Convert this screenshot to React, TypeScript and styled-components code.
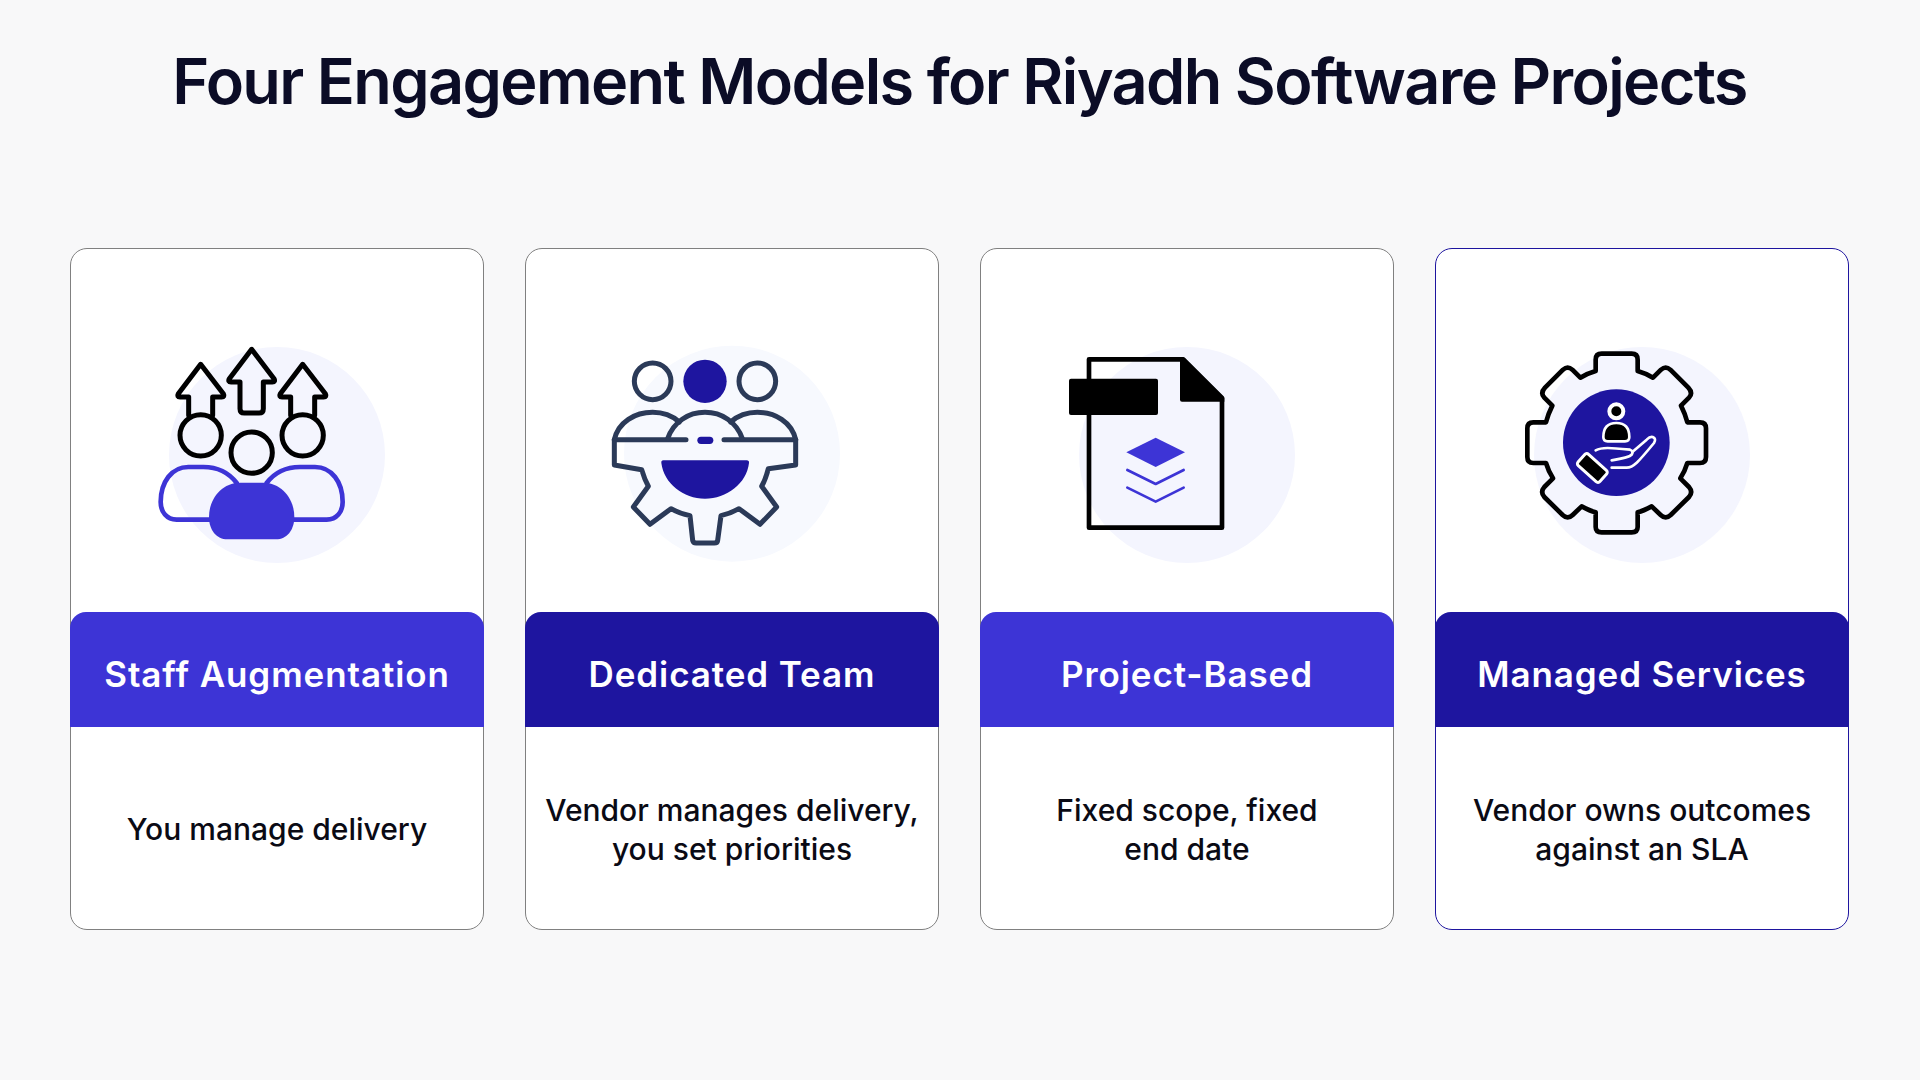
import React from "react";
import styled, { createGlobalStyle } from "styled-components";

const GlobalStyle = createGlobalStyle`
  html, body {
    margin: 0;
    padding: 0;
    background: #f8f8f9;
  }
`;

const INDIGO = "#3d34d6";
const NAVY = "#1e159f";
const SLATE = "#2b3a58";

const Page = styled.main`
  box-sizing: border-box;
  width: 1920px;
  height: 1080px;
  padding: 0 71px 0 70px;
  background: #f8f8f9;
  font-family: Inter, "Liberation Sans", sans-serif;
`;

const Title = styled.h1`
  margin: 0;
  height: 248px;
  padding-top: 41px;
  box-sizing: border-box;
  font-size: 63px;
  line-height: 80px;
  font-weight: 600;
  letter-spacing: -1.65px;
  color: #0b0c26;
  text-align: center;
  white-space: nowrap;
`;

const CardGrid = styled.section`
  display: grid;
  grid-template-columns: repeat(4, 414px);
  column-gap: 41px;
`;

const Card = styled.article<{ $accent?: boolean }>`
  box-sizing: border-box;
  height: 682px;
  display: flex;
  flex-direction: column;
  background: #fff;
  border: 1px solid ${(p) => (p.$accent ? NAVY : "#808080")};
  border-radius: 17px;
`;

const IconArea = styled.div`
  height: 363px;
  padding-top: 71px;
  box-sizing: border-box;
  display: flex;
  justify-content: center;
`;

const IconSvg = styled.svg`
  display: block;
  width: 270px;
  height: 270px;
  fill: none;
  stroke-linejoin: round;
  stroke-linecap: round;
`;

const Band = styled.h2<{ $dark?: boolean }>`
  margin: 0 -1px;
  box-sizing: border-box;
  height: 115px;
  padding-top: 9px;
  flex: none;
  display: flex;
  align-items: center;
  justify-content: center;
  border-radius: 16px 16px 0 0;
  background: ${(p) => (p.$dark ? NAVY : INDIGO)};
  color: #fff;
  font-size: 35px;
  font-weight: 600;
  letter-spacing: 0.9px;
  white-space: nowrap;
`;

const Body = styled.p`
  margin: 0;
  padding-top: 3px;
  flex: 1;
  display: flex;
  align-items: center;
  justify-content: center;
  text-align: center;
  font-size: 30px;
  line-height: 39px;
  font-weight: 500;
  color: #0a0a14;
`;

const StaffIcon = () => (
  <IconSvg viewBox="246 239 810 810">
    <circle cx="651" cy="644" r="324" fill="#f4f5fe" />
    <g stroke="#000" strokeWidth="15">
      <path d="M386 525V470H360Q350 470 355 460L422 372L490 460Q495 470 485 470H458V525" />
      <path d="M575 327L508 415Q503 425 513 425H540V505Q540 518 553 518H597Q610 518 610 505V425H637Q647 425 642 415Z" />
      <path d="M692 525V470H666Q656 470 661 460L728 372L796 460Q801 470 791 470H764V525" />
      <circle cx="422" cy="585" r="62" />
      <circle cx="575" cy="637" r="62" />
      <circle cx="728" cy="585" r="62" />
    </g>
    <g stroke={INDIGO} strokeWidth="14">
      <path d="M530 728C505 695 470 680 430 680H385C335 680 302 725 302 785C302 815 320 838 350 838H450" />
      <path d="M620 728C645 695 680 680 720 680H765C815 680 848 725 848 785C848 815 830 838 800 838H700" />
    </g>
    <path
      fill={INDIGO}
      d="M540 727H610C665 727 703 775 703 830C703 870 680 897 648 897H502C470 897 447 870 447 830C447 775 485 727 540 727Z"
    />
  </IconSvg>
);

const TeamIcon = () => (
  <IconSvg viewBox="231 239 810 810">
    <circle cx="636" cy="640" r="324" fill="#f7f9fe" />
    <circle cx="555" cy="423" r="65" fill={NAVY} />
    <rect x="532" y="589" width="48" height="22" rx="11" fill={NAVY} />
    <path
      fill={NAVY}
      d="M430 660H680Q688 660 687 668C680 730 620 775 555 775C490 775 432 730 424 668Q423 660 430 660Z"
    />
    <g stroke={SLATE} strokeWidth="15">
      <circle cx="398" cy="423" r="55" />
      <circle cx="712" cy="423" r="55" />
      <path d="M283 598H498M612 598H827" />
      <path d="M283 598C295 545 345 516 398 516C430 516 455 525 478 545" />
      <path d="M443 595C460 545 505 516 555 516C605 516 650 545 667 595" />
      <path d="M632 545C655 525 680 516 712 516C765 516 815 545 827 598" />
      <path d="M283 598V674L365 688C370 705 375 720 385 738L340 800L390 852L453 805C470 815 490 822 510 826L518 900Q520 908 528 908H583Q592 908 593 900L603 826C620 822 640 815 657 805L720 852L770 800L725 738C735 720 740 705 745 685L827 674V598" />
    </g>
  </IconSvg>
);

const ProjectIcon = () => (
  <IconSvg viewBox="216 239 810 810">
    <circle cx="621" cy="644" r="324" fill="#f4f5fe" />
    <path stroke="#000" strokeWidth="14" d="M327 357H610L726 473V862H327Z" />
    <path fill="#000" d="M600 352H612L733 472V484H606Q600 484 600 478Z" />
    <rect x="267" y="415" width="267" height="109" rx="6" fill="#000" />
    <path fill={INDIGO} d="M527 592L615 636L527 680L439 636Z" />
    <g stroke={INDIGO} strokeWidth="8">
      <path d="M442 689L527 731L611 689" />
      <path d="M442 742L527 784L611 742" />
    </g>
  </IconSvg>
);

const ManagedIcon = () => (
  <IconSvg viewBox="231 239 810 810">
    <circle cx="636" cy="644" r="324" fill="#f4f5fe" />
    <circle cx="559" cy="607" r="160" fill={NAVY} />
    <path
      stroke="#000"
      strokeWidth="14"
      d="M497 392V358Q497 340 515 340H605Q623 340 623 358V392C640 397 655 403 669 412L693 388Q707 376 721 388L775 442Q790 458 777 472L753 496C760 510 767 525 772 546H810Q828 546 828 564V650Q828 668 810 668H772C767 685 760 700 751 714L777 740Q790 755 777 770L722 824Q707 838 692 824L665 798C650 806 638 812 623 816V860Q623 876 605 876H515Q497 876 497 860V816C482 812 470 806 455 798L428 824Q413 838 398 824L343 770Q330 755 343 740L369 714C360 700 353 685 348 668H310Q292 668 292 650V564Q292 546 310 546H348C353 525 360 510 367 496L343 472Q330 458 345 442L399 388Q413 376 427 388L451 412C465 403 480 397 497 392Z"
    />
    <g stroke="#fff">
      <circle cx="559" cy="513" r="21" fill="#000" strokeWidth="12" />
      <path
        fill="#000"
        strokeWidth="8"
        d="M520 590C520 560 535 548 559 548C583 548 598 560 598 590Q598 603 585 603H533Q520 603 520 590Z"
      />
      <g strokeWidth="8">
        <path d="M497 630C515 620 540 622 600 628Q612 632 605 643Q598 652 545 660" />
        <path d="M545 682H590C610 682 625 665 672 608Q680 595 668 590Q660 588 650 598L607 635" />
      </g>
      <rect
        x="443"
        y="660"
        width="88"
        height="46"
        rx="8"
        fill="#000"
        strokeWidth="9"
        transform="rotate(42 487 683)"
      />
    </g>
  </IconSvg>
);

const models = [
  {
    name: "Staff Augmentation",
    text: <>You manage delivery</>,
    icon: <StaffIcon />
  },
  {
    name: "Dedicated Team",
    text: (
      <>
        Vendor manages delivery,
        <br />
        you set priorities
      </>
    ),
    icon: <TeamIcon />,
    dark: true
  },
  {
    name: "Project-Based",
    text: (
      <>
        Fixed scope, fixed
        <br />
        end date
      </>
    ),
    icon: <ProjectIcon />
  },
  {
    name: "Managed Services",
    text: (
      <>
        Vendor owns outcomes
        <br />
        against an SLA
      </>
    ),
    icon: <ManagedIcon />,
    dark: true,
    accent: true
  }
];

export default function App() {
  return (
    <Page>
      <GlobalStyle />
      <Title>Four Engagement Models for Riyadh Software Projects</Title>
      <CardGrid>
        {models.map((model) => (
          <Card key={model.name} $accent={model.accent}>
            <IconArea>{model.icon}</IconArea>
            <Band $dark={model.dark}>{model.name}</Band>
            <Body>
              <span>{model.text}</span>
            </Body>
          </Card>
        ))}
      </CardGrid>
    </Page>
  );
}
